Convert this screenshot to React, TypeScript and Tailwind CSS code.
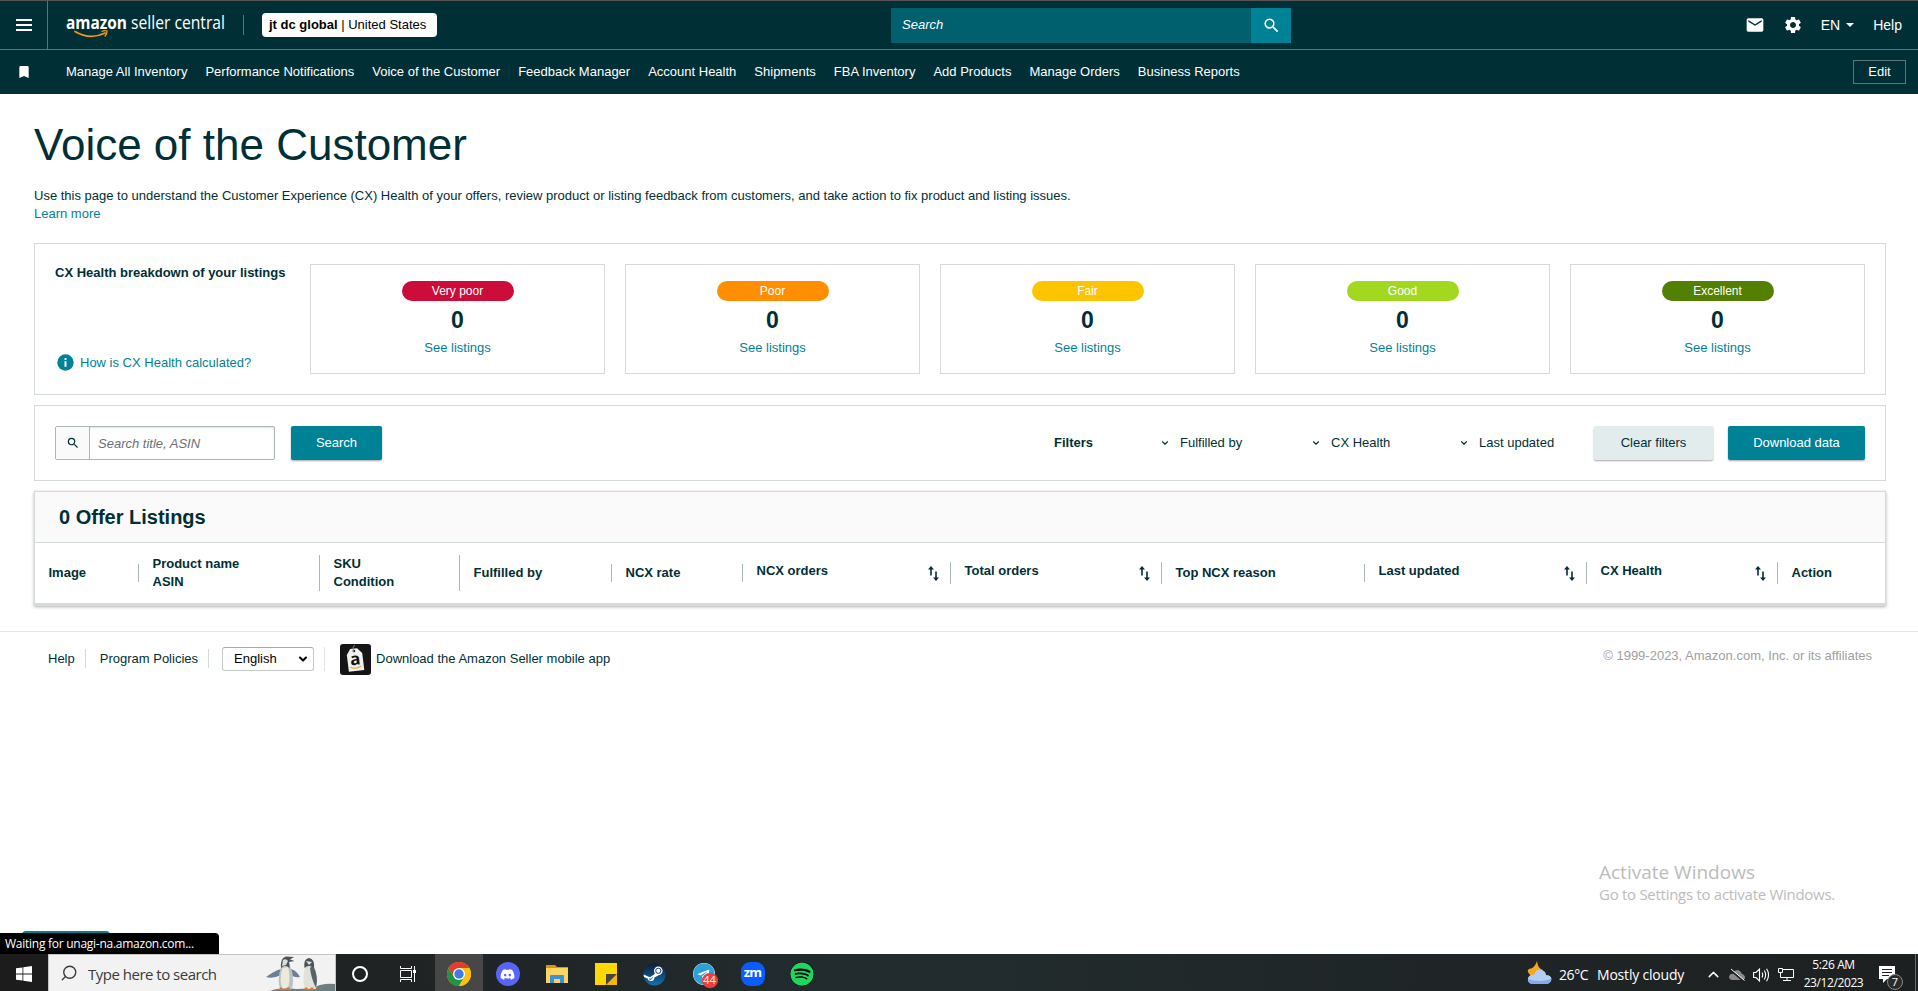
import React from "react";
import clsx from "clsx";
import { MdEmail, MdSettings, MdSearch, MdBookmark } from "react-icons/md";
import { FaDiscord, FaSpotify, FaSteam, FaTelegram } from "react-icons/fa";
import { ChevronDown, ChevronUp, Search } from "lucide-react";

const favorites = [
  "Manage All Inventory",
  "Performance Notifications",
  "Voice of the Customer",
  "Feedback Manager",
  "Account Health",
  "Shipments",
  "FBA Inventory",
  "Add Products",
  "Manage Orders",
  "Business Reports",
];

const healthGroups = [
  { label: "Very poor", color: "bg-[#cc0c39]", count: 0 },
  { label: "Poor", color: "bg-[#ff8f00]", count: 0 },
  { label: "Fair", color: "bg-[#ffc400]", count: 0 },
  { label: "Good", color: "bg-[#a2d820]", count: 0 },
  { label: "Excellent", color: "bg-[#538000]", count: 0 },
];

const columns = [
  { lines: ["Image"], sortable: false },
  { lines: ["Product name", "ASIN"], sortable: false },
  { lines: ["SKU", "Condition"], sortable: false },
  { lines: ["Fulfilled by"], sortable: false },
  { lines: ["NCX rate"], sortable: false },
  { lines: ["NCX orders"], sortable: true },
  { lines: ["Total orders"], sortable: true },
  { lines: ["Top NCX reason"], sortable: false },
  { lines: ["Last updated"], sortable: true },
  { lines: ["CX Health"], sortable: true },
  { lines: ["Action"], sortable: false },
];

function Logo() {
  return (
    <svg
      width="162"
      height="32"
      viewBox="0 0 162 32"
      className="shrink-0 overflow-visible"
    >
      <text
        x="0"
        y="20"
        fill="#fff"
        fontFamily="'Open Sans', sans-serif"
        fontWeight="700"
        fontSize="17.5"
        textLength="61"
        lengthAdjust="spacingAndGlyphs"
      >
        amazon
      </text>
      <text
        x="65"
        y="20"
        fill="#fff"
        fontFamily="'Open Sans', sans-serif"
        fontSize="18"
        textLength="94"
        lengthAdjust="spacingAndGlyphs"
      >
        seller central
      </text>
      <path
        d="M9 22.500Q24 31.500 39 24"
        fill="none"
        stroke="#f3961d"
        strokeWidth="1.8"
        strokeLinecap="round"
      />
      <path
        d="M35.500 22.300Q39.500 21.300 41 22Q41.300 24.500 38.800 27.500"
        fill="none"
        stroke="#f3961d"
        strokeWidth="1.3"
      />
    </svg>
  );
}

function Header() {
  return (
    <header className="bg-[#002f36] text-white">
      <div className="flex h-[50px] items-center border-t border-b border-t-[#555] border-b-[#5f7478]">
        <div className="flex h-full w-12 shrink-0 items-center justify-center border-r border-[#5f7478]">
          <div className="flex w-4 flex-col gap-[2px]">
            <div className="h-[2px] bg-white" />
            <div className="my-px h-[2px] bg-white" />
            <div className="h-[2px] bg-white" />
          </div>
        </div>
        <div className="ml-[18px] flex w-[825px] items-center">
          <Logo />
          <div className="ml-[15px] h-5 w-px bg-[#5f7478]" />
          <div className="ml-[18px] flex h-6 w-[175px] items-center rounded-sm bg-white pl-[7px] text-[13px] whitespace-pre text-black">
            <b>jt dc global</b> | United States
          </div>
        </div>
        <div className="flex h-[35px] w-[400px] items-center bg-[#00606e]">
          <span className="flex-1 pl-[11px] text-[13px] italic">Search</span>
          <div className="flex h-full w-10 items-center justify-center bg-[#008296]">
            <MdSearch size={19} />
          </div>
        </div>
        <div className="ml-auto flex items-center pr-4 text-sm">
          <MdEmail size={20} className="mr-[18px]" />
          <MdSettings size={20} className="mr-[18px]" />
          <span>EN</span>
          <div className="mr-[19px] ml-[6px] border-x-4 border-t-4 border-x-transparent border-t-white" />
          <span>Help</span>
        </div>
      </div>
      <nav className="flex h-11 items-center text-[13px]">
        <div className="flex w-[66px] pl-4">
          <MdBookmark size={16} />
        </div>
        <div className="flex gap-[18px] whitespace-nowrap">
          {favorites.map((item) => (
            <a key={item}>{item}</a>
          ))}
        </div>
        <button className="mr-3 ml-auto h-6 w-[53px] border border-[#5f7478]">
          Edit
        </button>
      </nav>
    </header>
  );
}

function HealthBreakdown() {
  return (
    <section className="flex h-[152px] border border-[#d5dbdb] px-5 pt-5">
      <div className="flex h-[110px] w-[255px] shrink-0 flex-col justify-between">
        <h2 className="text-[13px] leading-[18px] font-bold">
          CX Health breakdown of your listings
        </h2>
        <a className="flex items-center pb-[2px] pl-[2px] text-[#008296]">
          <svg width="17" height="17" viewBox="0 0 17 17" className="mr-[6px]">
            <circle cx="8.5" cy="8.5" r="8.2" fill="#008296" />
            <rect x="7.5" y="4" width="2" height="2" fill="#fff" />
            <rect x="7.5" y="7.2" width="2" height="5.6" fill="#fff" />
          </svg>
          How is CX Health calculated?
        </a>
      </div>
      <div className="flex gap-5">
        {healthGroups.map((group) => (
          <div
            key={group.label}
            className="flex h-[110px] w-[295px] flex-col items-center border border-[#d5dbdb] pt-4"
          >
            <span
              className={clsx(
                "flex h-5 w-28 items-center justify-center rounded-full text-xs text-white",
                group.color,
              )}
            >
              {group.label}
            </span>
            <b className="mt-[7px] text-[23px] leading-6">{group.count}</b>
            <a className="mt-[7px] leading-[18px] text-[#008296]">
              See listings
            </a>
          </div>
        ))}
      </div>
    </section>
  );
}

function Filter({ label, className }: { label: string; className: string }) {
  return (
    <div className={clsx("flex items-center", className)}>
      <ChevronDown size={10} strokeWidth={2.6} className="mr-[10px]" />
      {label}
    </div>
  );
}

function Toolbar() {
  return (
    <section className="mt-[10px] flex h-[76px] items-center border border-[#d5dbdb] px-5">
      <div className="flex h-[34px] w-[220px] rounded-xs border border-[#aab7b8] shadow-[inset_0_1px_2px_rgba(0,0,0,0.12)]">
        <div className="flex w-[34px] items-center justify-center border-r border-[#aab7b8] bg-[#fafafa]">
          <MdSearch size={14} />
        </div>
        <span className="pl-2 leading-[33px] text-[#687078] italic">
          Search title, ASIN
        </span>
      </div>
      <button className="ml-4 h-[34px] w-[91px] rounded-xs bg-[#008296] text-white shadow-[0_1px_2px_rgba(0,0,0,0.35)]">
        Search
      </button>
      <div className="ml-auto flex items-center">
        <b className="w-[106px]">Filters</b>
        <Filter label="Fulfilled by" className="w-[151px]" />
        <Filter label="CX Health" className="w-[148px]" />
        <Filter label="Last updated" className="w-[135px]" />
        <button className="h-[34px] w-[119px] rounded-xs bg-[#e3eced] shadow-[0_1px_2px_rgba(0,0,0,0.35)]">
          Clear filters
        </button>
        <button className="ml-[15px] h-[34px] w-[137px] rounded-xs bg-[#008296] text-white shadow-[0_1px_2px_rgba(0,0,0,0.35)]">
          Download data
        </button>
      </div>
    </section>
  );
}

function SortIcon() {
  return (
    <svg
      width="11"
      height="15"
      viewBox="0 0 11 15"
      fill="#002f36"
      className="mr-[11px]"
    >
      <path d="M0 3.500L3 0L6 3.500H3.800V9.500H2.200V3.500Z" />
      <path d="M5 11.500L8 15L11 11.500H8.800V5.500H7.200V11.500Z" />
    </svg>
  );
}

function Listings() {
  return (
    <section className="mt-[10px] h-[115px] border border-b-[3px] border-[#d5dbdb] shadow-[0_1px_3px_rgba(0,0,0,0.3)]">
      <h2 className="h-[51px] border-b border-[#d5dbdb] bg-[#fafafa] pl-6 text-xl leading-[50px] font-bold">
        0 Offer Listings
      </h2>
      <div className="grid h-[60px] grid-cols-[104px_181px_140px_152px_131px_208px_211px_203px_222px_191px_1fr] items-center font-bold">
        {columns.map((col, i) => (
          <div
            key={i}
            className={clsx(
              "flex items-center justify-between pl-[13.5px]",
              i < columns.length - 1 && "border-r border-[#aab7b8]",
              col.sortable && "h-[22px]",
            )}
          >
            <div className={clsx("leading-[18px]", col.sortable && "pb-1")}>
              {col.lines.map((line) => (
                <div key={line}>{line}</div>
              ))}
            </div>
            {col.sortable && <SortIcon />}
          </div>
        ))}
      </div>
    </section>
  );
}

function AppBadge() {
  return (
    <svg
      width="31"
      height="31"
      viewBox="0 0 31 31"
      className="mt-[2px] mr-[5px]"
    >
      <rect width="31" height="31" rx="3" fill="#151515" />
      <g transform="rotate(-7 15 16)">
        <path d="M11.500 4.500H18.500L23 10V27H7.500V10Z" fill="#f1f1f1" />
        <circle cx="15" cy="7" r="1.3" fill="#151515" />
        <text
          x="15.2"
          y="21"
          textAnchor="middle"
          fontFamily="'Open Sans', sans-serif"
          fontWeight="700"
          fontSize="17"
          fill="#111"
        >
          a
        </text>
        <path d="M9.500 22.500Q15 26 20.500 22.500" stroke="#f3961d" fill="none" />
      </g>
      <path d="M13.500 8Q12 3 14.500 1" stroke="#888" fill="none" />
    </svg>
  );
}

function Footer() {
  return (
    <footer className="mt-[25px] flex h-[54px] items-center border-t border-[#e7e9e9] pr-[46px] pl-12">
      <a className="border-r border-[#d5dbdb] pr-[10px] leading-[19px]">Help</a>
      <a className="border-r border-[#d5dbdb] pr-[10px] pl-[14px] leading-[19px]">
        Program Policies
      </a>
      <div className="ml-[13px] flex h-6 w-[92px] items-center justify-between rounded-[3px] border border-[#c5c9c9] border-t-[#aaa] pr-1 pl-[11px] text-black">
        English
        <ChevronDown size={12} strokeWidth={4} />
      </div>
      <div className="mr-[15px] ml-[10px] h-6 w-px bg-[#e0e4e4]" />
      <AppBadge />
      <a>Download the Amazon Seller mobile app</a>
      <span className="ml-auto pb-[5px] text-[#a0a0a0]">
        © 1999-2023, Amazon.com, Inc. or its affiliates
      </span>
    </footer>
  );
}

function Penguins() {
  return (
    <svg width="69" height="36" viewBox="0 0 69 36" className="ml-auto">
      <path d="M4 36Q14 32 30 34Q46 34 54 30Q62 28 69 29V36Z" fill="#6d7d80" />
      <path d="M15 14Q8 16 0 22Q7 24 15 20Z" fill="#6c7f93" />
      <path d="M25 14Q31 16 34 22Q29 23 25 20Z" fill="#6c7f93" />
      <path d="M15 12Q11 24 14 34H26Q29 22 24 11Z" fill="#b9c3c4" />
      <path d="M16.500 13Q13 24 16 33H22Q25 22 22 12Z" fill="#eceadb" />
      <path d="M15 13Q14 3 20 1.500L28 2L24 4.500L28.500 6L23 7Q24 10 23.500 13Q19 9 15 13Z" fill="#4a545b" />
      <path d="M17 5Q20 3 22 6L20 10L16 11Z" fill="#d9ded8" />
      <path d="M39 12Q36 24 39 34H50Q53 22 48 11Z" fill="#e0e1d8" />
      <path d="M47 10Q53 22 50 33Q45 23 44 13Z" fill="#56636b" />
      <path d="M38.500 13Q37 4 43 3Q49 4 48 13Q43 9 38.500 13Z" fill="#4a545b" />
      <path d="M40 6L46 7L43 10Z" fill="#dfe2d9" />
      <path d="M12 35L15 32L18 34.500L22 32L26 35Z" fill="#e8722c" />
      <path d="M37 35L40 32L43 34.500L46 32L49 35Z" fill="#e8722c" />
    </svg>
  );
}

function ChromeIcon() {
  return (
    <svg width="24" height="24" viewBox="0 0 24 24">
      <circle cx="12" cy="12" r="12" fill="#fbc116" />
      <path d="M12 6H22.400A12 12 0 0 0 1.600 6L6.800 15Z" fill="#e33b2e" />
      <path d="M1.600 6A12 12 0 0 0 12 24L17.200 15L12 12L6.800 15Z" fill="#229342" />
      <path d="M12 24A12 12 0 0 0 22.400 6H12L17.200 15Z" fill="#fbc116" />
      <circle cx="12" cy="12" r="6" fill="#fff" />
      <circle cx="12" cy="12" r="4.7" fill="#3a7de9" />
    </svg>
  );
}

function FolderIcon() {
  return (
    <svg width="22" height="19" viewBox="0 0 22 19">
      <path d="M0 0H9L11 2H22V8H0Z" fill="#d9960a" />
      <rect y="3" width="22" height="15" fill="#fcd462" />
      <path d="M4 18V11Q4 10 5 10H17Q18 10 18 11V18H14V14H8V18Z" fill="#3a93d6" />
    </svg>
  );
}

function TaskButton({
  children,
  className = "w-[49px]",
}: {
  children: React.ReactNode;
  className?: string;
}) {
  return (
    <div
      className={clsx(
        "flex h-full items-center justify-center pt-[3px]",
        className,
      )}
    >
      {children}
    </div>
  );
}

function Taskbar() {
  return (
    <div className="flex h-[37px] items-center bg-linear-to-r from-[#1c1c1c] via-[#222c2e] via-45% to-[#1d2021] font-['Open_Sans','Noto_Sans',sans-serif] text-white">
      <div className="flex w-12 justify-center pt-[3px]">
        <svg width="16" height="16" viewBox="0 0 16 16" fill="#fff">
          <path d="M0 2.300L6.500 1.400V7.600H0ZM7.300 1.300L16 0V7.600H7.300ZM0 8.400H6.500V14.600L0 13.700ZM7.300 8.400H16V16L7.300 14.700Z" />
        </svg>
      </div>
      <div className="flex h-full w-72 items-center border border-b-0 border-[#c4c4c4] bg-[#f2f2f2] text-[#3a3a3a]">
        <Search size={18} strokeWidth={1.8} className="ml-[11px] -scale-x-100" />
        <span className="ml-[10px] pt-[3px] text-[15px] tracking-[-0.5px]">
          Type here to search
        </span>
        <Penguins />
      </div>
      <TaskButton className="w-12">
        <div className="h-4 w-4 rounded-full border-[2.5px] border-white" />
      </TaskButton>
      <TaskButton className="w-12">
        <svg width="16" height="16" viewBox="0 0 16 16" fill="none" stroke="#fff">
          <path d="M.5 0V2.500H11.500V0M.5 16V13.500H11.500V16M.5 4.500H11.500V11.500H.5ZM14.500 0V16" />
          <rect x="13.5" y="4.5" width="2" height="2" fill="#fff" />
        </svg>
      </TaskButton>
      <div className="w-[3px]" />
      <TaskButton className="w-12 bg-[#474747]">
        <ChromeIcon />
      </TaskButton>
      <TaskButton>
        <div className="flex h-6 w-6 items-center justify-center rounded-full bg-[#5865f2]">
          <FaDiscord size={15} />
        </div>
      </TaskButton>
      <TaskButton>
        <FolderIcon />
      </TaskButton>
      <TaskButton>
        <svg width="22" height="22" viewBox="0 0 22 22">
          <path d="M0 0H22V11L11 22H0Z" fill="#ffd800" />
          <path d="M11 11H22L11 22Z" fill="#444" />
          <path d="M22 11V22H11Z" fill="#f6b50b" />
        </svg>
      </TaskButton>
      <TaskButton>
        <svg width="23" height="23" viewBox="0 0 23 23">
          <defs>
            <linearGradient id="steam" x1="0" y1="0" x2="0" y2="1">
              <stop offset="0" stopColor="#101c3f" />
              <stop offset="1" stopColor="#1273ab" />
            </linearGradient>
          </defs>
          <circle cx="11.5" cy="11.5" r="11" fill="url(#steam)" />
          <path
            d="M0.500 11.500L7 14.200L11 11.500L14 8L18 11L11.500 14.500Q11 18.500 7.500 18Q5 17.500 4.600 15.500L1 14Z"
            fill="#fff"
          />
          <circle cx="15.3" cy="7.8" r="4.3" fill="#fff" />
          <circle cx="15.3" cy="7.8" r="2.6" fill="none" stroke="#1b3e6f" />
          <path d="M6 16Q8.500 17.500 9.500 14.500" fill="none" stroke="#1b5d92" />
        </svg>
      </TaskButton>
      <TaskButton>
        <div className="relative">
          <FaTelegram size={22} className="rounded-full bg-white text-[#2ba0da]" />
          <span className="absolute top-[10px] left-[9px] flex h-[15px] w-4 items-center justify-center rounded-full bg-[#ef3e3a] text-[11px]">
            44
          </span>
        </div>
      </TaskButton>
      <TaskButton>
        <div className="flex h-6 w-6 items-center justify-center rounded-[9px] bg-[#0b5cff] pb-[3px] text-[13px] leading-none font-bold tracking-[-0.8px]">
          zm
        </div>
      </TaskButton>
      <TaskButton>
        <FaSpotify size={24} className="rounded-full bg-black text-[#1ed760]" />
      </TaskButton>

      <div className="ml-auto flex h-full items-center">
        <svg width="25" height="24" viewBox="0 0 25 24" className="mr-[7px]">
          <path d="M10 0Q8 7 2 8Q0 9 1 11Q4 17 11 15Q16 13 16 9Q11 8 10 0Z" fill="#f5a623" />
          <path
            d="M5 23Q0 22 1 17Q3 13 7 14Q9 8 14 9Q19 10 19 14Q24 14 24.500 18Q24 22 20 23Z"
            fill="#b2cdf6"
          />
          <path d="M1 18Q12 22 24 18Q24 22 20 23H5Q1 22 1 18Z" fill="#82aaec" />
        </svg>
        <span className="w-[38px] pt-1 text-sm tracking-[-0.4px]">26°C</span>
        <span className="w-[108px] pt-1 text-sm tracking-[-0.2px]">
          Mostly cloudy
        </span>
        <ChevronUp size={17} strokeWidth={2} className="mt-1 mr-[7px]" />
        <svg width="16" height="14" viewBox="0 0 16 14" className="mt-1 mr-2">
          <path
            d="M4 12Q0 12 0 8.500Q1 5 4 6Q5 2 9 2Q12 3 13 6Q16 7 16 9.500Q16 12 13 12Z"
            fill="#8a8a8a"
          />
          <path d="M1 1.500L15 13.500" stroke="#1d2021" strokeWidth="2" />
          <path d="M2 1L15.500 12.500" stroke="#fff" />
        </svg>
        <svg
          width="17"
          height="16"
          viewBox="0 0 17 16"
          fill="none"
          stroke="#fff"
          strokeWidth="1.1"
          className="mt-1 mr-2"
        >
          <path d="M.6 5.500H3L6.500 2V14L3 10.500H.6ZM9 5.500Q10.500 8 9 10.500M11.300 3.500Q14 8 11.300 12.500M13.600 1.800Q17.500 8 13.600 14.200" />
        </svg>
        <svg
          width="16"
          height="15"
          viewBox="0 0 16 15"
          fill="none"
          stroke="#fff"
          className="mt-1"
        >
          <path d="M5 2.500H15.500V10.500H2.500V6M.5 1.500H4.500V5.500H.5ZM9 10.500V13.500M5 13.500H13" />
        </svg>
        <div className="flex w-[79px] flex-col items-center pt-[2px] text-xs leading-[18px] tracking-[-0.4px]">
          <span>5:26 AM</span>
          <span>23/12/2023</span>
        </div>
        <div className="relative mr-5 ml-[6px] pt-1">
          <svg width="16" height="17" viewBox="0 0 16 17">
            <path d="M0 0H16V13H8L4 17V13H0Z" fill="#fff" />
            <path d="M3 3.500H13M3 6.500H13M3 9.500H10" stroke="#222" />
          </svg>
          <span className="absolute top-3 left-2 flex h-4 w-4 items-center justify-center rounded-full border border-[#8a8a8a] bg-[#2b2b2b] text-[11px]">
            7
          </span>
        </div>
        <div className="mr-[2px] h-full w-px bg-[#6a6a6a]" />
      </div>
    </div>
  );
}

export default function App() {
  return (
    <div className="relative flex h-[991px] w-[1918px] flex-col overflow-hidden bg-white font-['Liberation_Sans',Arial,sans-serif] text-[13px] text-[#002f36]">
      <Header />
      <main className="flex-1">
        <div className="px-[34px]">
          <h1 className="pt-[25px] text-[44px] leading-[52px]">
            Voice of the Customer
          </h1>
          <p className="mt-4 mb-5 leading-[18px]">
            Use this page to understand the Customer Experience (CX) Health of
            your offers, review product or listing feedback from customers, and
            take action to fix product and listing issues.
            <br />
            <a className="text-[#008296]">Learn more</a>
          </p>
          <div className="w-[1852px]">
            <HealthBreakdown />
            <Toolbar />
            <Listings />
          </div>
        </div>
        <Footer />
      </main>
      <div className="absolute top-[861px] left-[1599px] font-['Open_Sans','Noto_Sans',sans-serif] text-[#bcbcbc]">
        <div className="text-[19px] leading-[22px]">Activate Windows</div>
        <div className="text-[15px] leading-[22px] tracking-[-0.28px]">
          Go to Settings to activate Windows.
        </div>
      </div>
      <div className="absolute top-[931px] left-[22px] h-3 w-[88px] rounded-t-sm bg-[#008296]" />
      <div className="absolute top-[933px] left-0 h-[21px] w-[219px] rounded-tr-sm bg-black pl-[5px] font-['Open_Sans','Noto_Sans',sans-serif] text-xs leading-[21px] tracking-[-0.26px] text-white">
        Waiting for unagi-na.amazon.com...
      </div>
      <Taskbar />
    </div>
  );
}
